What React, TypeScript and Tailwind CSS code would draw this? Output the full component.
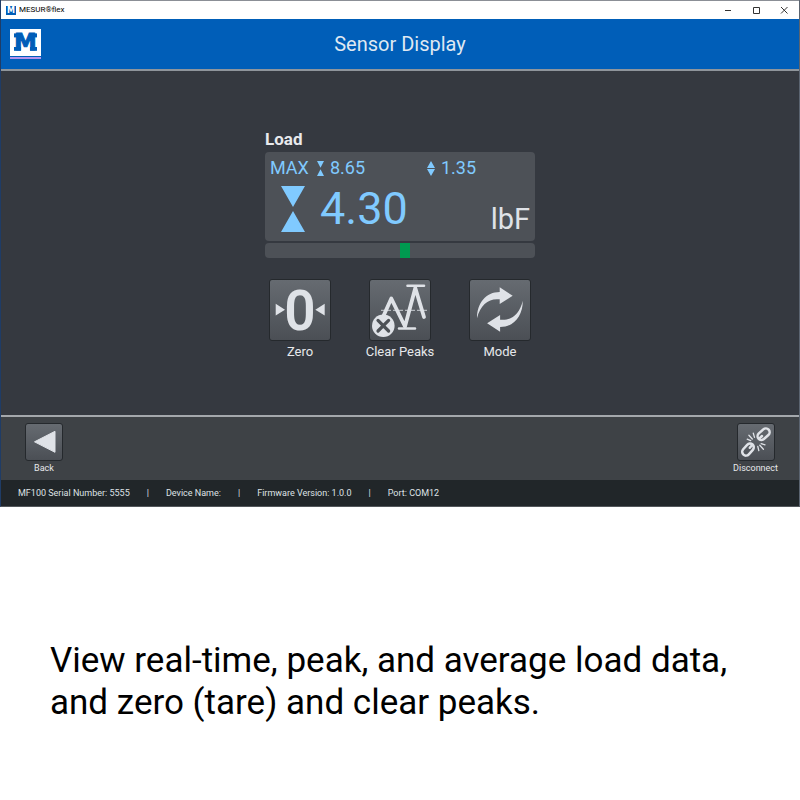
import type { ReactNode } from "react";

const font = "font-[Roboto,'Liberation_Sans',sans-serif]";

function LogoMark() {
  return (
    <svg viewBox="0 0 31 27" className="h-[27px] w-[31px]" fill="#005eb8" aria-hidden="true">
      <rect width="31" height="27" fill="#ffffff" />
      <text
        x="15.5"
        y="21.3"
        textAnchor="middle"
        fontFamily="'DejaVu Sans', sans-serif"
        fontWeight="700"
        fontSize="22.5"
        stroke="#005eb8"
        strokeWidth="1"
      >
        M
      </text>
      <rect x="4" y="4.4" width="4" height="4" />
      <rect x="23" y="4.4" width="4" height="4" />
      <rect x="4" y="18" width="7" height="3.8" />
      <rect x="20" y="18" width="7" height="3.8" />
    </svg>
  );
}

function TitleLogo() {
  return (
    <svg viewBox="0 0 10 9" className="h-[9px] w-2.5 overflow-visible" aria-hidden="true">
      <rect width="10" height="9" fill="#005eb8" />
      <text
        x="5"
        y="7.3"
        textAnchor="middle"
        fontFamily="'DejaVu Sans', sans-serif"
        fontWeight="700"
        fontSize="8"
        fill="#ffffff"
      >
        M
      </text>
    </svg>
  );
}

function Hourglass({ className }: { className: string }) {
  return (
    <svg viewBox="0 0 24 46" preserveAspectRatio="none" className={className} aria-hidden="true">
      <path d="M0 0H24L12 21ZM0 46H24L12 25Z" fill="#80caff" />
    </svg>
  );
}

function Diamond() {
  return (
    <svg viewBox="0 0 8 15" className="h-[15px] w-2" aria-hidden="true">
      <path d="M4 0L8 7H0ZM4 15L0 8H8Z" fill="#80caff" />
    </svg>
  );
}

function ZeroIcon() {
  return (
    <svg viewBox="1 1 60 60" className="size-full overflow-visible" aria-hidden="true">
      <path d="M6.7 24.7L16 30.7L6.7 36.5ZM55.7 24.7L46.3 30.7L55.7 36.5Z" fill="#dfe2e7" />
      <text
        x="31"
        y="50.5"
        textAnchor="middle"
        fontFamily="Roboto, sans-serif"
        fontWeight="600"
        fontSize="55"
        fill="#dfe2e7"
      >
        0
      </text>
    </svg>
  );
}

function ClearPeaksIcon() {
  return (
    <svg viewBox="1 1 60 60" className="size-full" fill="none" stroke="#dfe2e7" aria-hidden="true">
      <path d="M12 31.3H58" strokeWidth="1.2" strokeDasharray="4 2" stroke="#b4b8bd" />
      <path d="M14 38L22.3 19.5L36 47.5L46.3 9L55 38" strokeWidth="3.8" strokeLinecap="round" strokeLinejoin="round" />
      <path d="M38.5 6.8H55M30 49.5H46" strokeWidth="2.6" strokeLinecap="round" />
      <circle cx="14.3" cy="46.7" r="11.3" fill="#dfe2e7" stroke="none" />
      <path d="M9 41.4L19.6 52M19.6 41.4L9 52" stroke="#4d5156" strokeWidth="3.2" strokeLinecap="round" />
    </svg>
  );
}

function ModeIcon() {
  const arrow = "M8 39.3C8 24 17 13 30.7 13V8.3L43.7 16.7L30.7 25V20.3C20 19 11.5 25 8 39.3Z";
  return (
    <svg viewBox="1 1 60 60" className="size-full" fill="#dfe2e7" aria-hidden="true">
      <path d={arrow} />
      <path d={arrow} transform="rotate(180 30.9 30.5)" />
    </svg>
  );
}

function BackIcon() {
  return (
    <svg viewBox="0 0 36 36" className="size-full" aria-hidden="true">
      <path
        d="M8.5 17.8L29 7.3V28.3Z"
        fill="#dfe2e7"
        stroke="#dfe2e7"
        strokeWidth="1"
        strokeLinejoin="round"
      />
    </svg>
  );
}

function BrokenLinkIcon() {
  return (
    <svg viewBox="0 0 36 36" className="size-full" fill="none" stroke="#dfe2e7" strokeLinecap="round" aria-hidden="true">
      <g strokeWidth="2.5">
        <rect x="-6.8" y="-3.8" width="13.6" height="7.6" rx="3.8" transform="translate(25.6 10.2) rotate(-42)" />
        <rect x="-6.8" y="-3.8" width="13.6" height="7.6" rx="3.8" transform="translate(10 25.6) rotate(-48)" />
        <path d="M21 14.8L24 12M11.8 23.8L14.4 20.8" />
      </g>
      <path
        d="M9.2 15.2L12.7 16.6M10.9 11.2L14.3 15M15.3 9.2L16.5 13.4M19.8 22.5L20.8 26.6M21.8 21.3L25.4 25.2M23.1 19.6L27 20.8"
        strokeWidth="1.3"
      />
    </svg>
  );
}

function IconButton({ label, small, children }: { label: string; small?: boolean; children: ReactNode }) {
  return (
    <button
      type="button"
      className={
        small
          ? "flex flex-col items-center gap-px text-[9px] leading-3 text-[#e6e8eb]"
          : "flex w-[100px] flex-col items-center gap-px text-[13px] leading-5 text-[#e6e8eb]"
      }
    >
      <span
        className={`block rounded-[3px] border border-[#25292d] bg-linear-to-b from-[#666b71] to-[#4b4f55] ${
          small ? "size-[38px]" : "size-[62px]"
        }`}
      >
        {children}
      </span>
      <span className="whitespace-nowrap">{label}</span>
    </button>
  );
}

function WindowBar() {
  return (
    <div className="flex h-[19px] items-center border-t border-[#8b8f96] bg-white pr-2.5 pl-[5px]">
      <TitleLogo />
      <span className="ml-[3px] text-[8px] leading-3 text-black">MESUR®flex</span>
      <div className="ml-auto flex items-center gap-[18px] text-[#333]">
        <button type="button" aria-label="Minimize">
          <svg viewBox="0 0 10 10" className="size-2.5" stroke="currentColor">
            <path d="M2 5.5H8" />
          </svg>
        </button>
        <button type="button" aria-label="Maximize">
          <svg viewBox="0 0 10 10" className="size-2.5" stroke="currentColor" fill="none">
            <path d="M2.5 2.5H8.5V8.5H2.5Z" />
          </svg>
        </button>
        <button type="button" aria-label="Close">
          <svg viewBox="0 0 10 10" className="size-2.5" stroke="currentColor">
            <path d="M2 2L8.5 8.5M8.5 2L2 8.5" />
          </svg>
        </button>
      </div>
    </div>
  );
}

function LoadPanel() {
  return (
    <section className="w-[270px]">
      <h2 className="mb-px text-[17px] leading-6 font-bold text-[#e8eaed]">Load</h2>
      <div className="rounded bg-[#4d5157] px-[5px] pt-1 pb-[3px] text-[#80caff]">
        <div className="flex text-[18px] leading-6">
          <div className="flex w-[157px] items-center">
            <span>MAX</span>
            <Hourglass className="mr-1.5 ml-2 h-[15px] w-[7px]" />
            <span>8.65</span>
          </div>
          <div className="flex items-center gap-1.5">
            <Diamond />
            <span>1.35</span>
          </div>
        </div>
        <div className="flex items-center pl-[11px]">
          <Hourglass className="h-[46px] w-6" />
          <span className="ml-[15px] text-[45px] leading-[58px]">4.30</span>
          <span className="ml-auto pt-5 text-[29px] leading-9 text-[#dfe2e7]">lbF</span>
        </div>
      </div>
      <div
        className="mt-0.5 h-[15px] rounded bg-[#4d5157]"
        role="meter"
        aria-label="Load"
        aria-valuenow={4.3}
        aria-valuemin={-100}
        aria-valuemax={100}
      >
        <div className="ml-[50%] h-full w-2.5 bg-[#009a50]" />
      </div>
    </section>
  );
}

const statusItems = ["MF100 Serial Number: 5555", "Device Name:", "Firmware Version: 1.0.0", "Port: COM12"];

export default function App() {
  return (
    <div className={`min-h-screen bg-white ${font}`}>
      <div className="border-r border-b border-l border-r-[#5b6470] border-b-[#53575b] border-l-[#1f3c66]">
        <WindowBar />
        <header className="grid grid-cols-[1fr_auto_1fr] items-center border-b-2 border-[#8f959b] bg-[#005eb8] px-[9px] py-2.5">
          <div className="w-[31px] border-b-2 border-[#b493ec] pb-px">
            <LogoMark />
          </div>
          <h1 className="text-[20px] leading-[30px] text-[#dfe8f2]">Sensor Display</h1>
        </header>
        <main className="flex flex-col items-center bg-[#353940] pt-14 pb-[53px]">
          <LoadPanel />
          <div className="mt-[21px] flex">
            <IconButton label="Zero">
              <ZeroIcon />
            </IconButton>
            <IconButton label="Clear Peaks">
              <ClearPeaksIcon />
            </IconButton>
            <IconButton label="Mode">
              <ModeIcon />
            </IconButton>
          </div>
        </main>
        <nav className="flex justify-between border-t-2 border-[#a4a8ac] bg-[#3e4246] pt-1.5 pr-[21px] pb-1.5 pl-6">
          <IconButton label="Back" small>
            <BackIcon />
          </IconButton>
          <IconButton label="Disconnect" small>
            <BrokenLinkIcon />
          </IconButton>
        </nav>
        <footer className="bg-[#212629] px-[17px] py-[7px] text-[9px] leading-3 text-[#dfe2e5]">
          <ul className="flex">
            {statusItems.map((item) => (
              <li key={item} className="flex after:mx-[17px] after:content-['|'] last:after:hidden">
                {item}
              </li>
            ))}
          </ul>
        </footer>
      </div>
      <p className="px-[50px] pt-[133px] text-[35px] leading-[42px] text-black">
        View real-time, peak, and average load data, and zero (tare) and clear peaks.
      </p>
    </div>
  );
}
